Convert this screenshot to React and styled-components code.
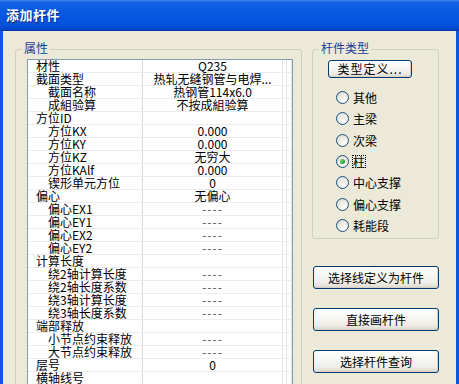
import React from 'react';
import styled, { createGlobalStyle } from 'styled-components';

const Global = createGlobalStyle`
  html, body { margin: 0; padding: 0; background: #ECE9D8; }
  body {
    width: 459px; height: 384px; overflow: hidden;
    font-family: "Noto Sans CJK SC", "DejaVu Sans", sans-serif;
    font-size: 12px; color: #000;
  }
  * { box-sizing: border-box; }
`;

const Window = styled.div`
  width: 459px;
  height: 384px;
  display: flex;
  flex-direction: column;
  overflow: hidden;
`;

const TitleBar = styled.div`
  flex: none;
  height: 31px;
  display: flex;
  align-items: center;
  padding: 0 0 2px 6px;
  background: linear-gradient(180deg, #3C82EE 0%, #1464E4 8%, #0A5BE0 30%, #0556E2 60%, #0451DA 85%, #0340C0 100%);
  border-bottom: 1px solid #0836B0;
`;

const Title = styled.span`
  color: #fff;
  font-weight: bold;
  font-size: 13px;
  letter-spacing: 0.5px;
  text-shadow: 1px 1px 0 #0A2A8A;
`;

const Frame = styled.div`
  flex: 1;
  min-height: 0;
  display: flex;
  gap: 10px;
  padding: 18px 17px 0 12px;
  background: #ECE9D8;
  border-left: 3px solid #0A56DC;
  border-right: 3px solid #0A56DC;
`;

const Group = styled.div`
  position: relative;
  flex: none;
  border: 1px solid #D0D0BF;
  border-radius: 3px;
`;

const LeftGroup = styled(Group)`
  width: 287px;
  height: 420px;
  padding: 9px 8px 0 11px;
`;

const RightGroup = styled(Group)`
  width: 127px;
  height: 190px;
  padding: 10px 0 0 0;
  display: flex;
  flex-direction: column;
  align-items: flex-start;
`;

const GroupLabel = styled.span`
  position: absolute;
  top: -10px;
  left: 6px;
  padding: 0 2px;
  background: #ECE9D8;
  color: #1D3B9A;
  font-size: 12px;
  line-height: 16px;
`;

const Grid = styled.div`
  border: 1px solid #7F9DB9;
  background: #fff;
  height: 400px;
  overflow: hidden;
`;

const Row = styled.div`
  display: grid;
  grid-template-columns: 115px 140px 4px 1fr;
  height: 13px;
  border-bottom: 1px solid #ECECEC;
`;

const Cell = styled.div`
  border-right: 1px solid #E2E2E2;
  line-height: 12px;
  font-size: 12px;
  white-space: nowrap;
`;

const NameCell = styled(Cell)`
  padding-left: ${p => (p.$child ? 20 : 8)}px;
  border-right-color: #D9D9D9;
`;

const ValueCell = styled(Cell)`
  text-align: center;
  color: ${p => (p.$dash ? '#555' : '#000')};
  letter-spacing: ${p => (p.$dash ? '1px' : '0')};
`;

const RightCol = styled.div`
  flex: none;
  width: 127px;
  display: flex;
  flex-direction: column;
`;

const XPButton = styled.button`
  font-family: "Noto Sans CJK SC", "DejaVu Sans", sans-serif;
  font-size: 12px;
  color: #000;
  padding: 0;
  border: 1px solid #003C74;
  border-radius: 3px;
  background: linear-gradient(180deg, #FFFFFF 0%, #F8F8F5 35%, #EFEEE9 75%, #DCD7CC 100%);
  box-shadow: inset -1px -1px 0 #D6D0C5;
  display: flex;
  align-items: center;
  justify-content: center;
  line-height: 1;
`;

const TypeButton = styled(XPButton)`
  width: 84px;
  height: 18px;
  margin-left: 15px;
  letter-spacing: 1px;
`;

const ActionButton = styled(XPButton)`
  width: 126px;
  height: 23px;
  margin-left: 1px;
  margin-top: ${p => p.$top}px;
`;

const RadioList = styled.div`
  margin-top: 13px;
  margin-left: 23px;
  display: flex;
  flex-direction: column;
  gap: 8.35px;
`;

const RadioItem = styled.label`
  display: flex;
  align-items: center;
  gap: 3px;
  height: 13px;
  font-size: 12px;
  line-height: 13px;
`;

const Circle = styled.span`
  flex: none;
  width: 13px;
  height: 13px;
  border-radius: 50%;
  border: 1px solid #1C5180;
  background: radial-gradient(circle at 65% 70%, #FFFFFF 0%, #EEEDE6 45%, #D4D3CC 100%);
  display: flex;
  align-items: center;
  justify-content: center;
  &::after {
    content: '';
    display: ${p => (p.$checked ? 'block' : 'none')};
    width: 5px;
    height: 5px;
    border-radius: 50%;
    background: radial-gradient(circle at 35% 35%, #7BD07B, #21A121 70%);
  }
`;

const RadioText = styled.span`
  padding: 0 1px;
  outline: ${p => (p.$focus ? '1px dotted #000' : 'none')};
  outline-offset: -1px;
`;

const rows = [
  ['材性', 'Q235', false],
  ['截面类型', '热轧无缝钢管与电焊...', false],
  ['截面名称', '热钢管114x6.0', true],
  ['成組验算', '不按成組验算', true],
  ['方位ID', '', false],
  ['方位KX', '0.000', true],
  ['方位KY', '0.000', true],
  ['方位KZ', '无穷大', true],
  ['方位KAlf', '0.000', true],
  ['锲形单元方位', '0', true],
  ['偏心', '无偏心', false],
  ['偏心EX1', '----', true],
  ['偏心EY1', '----', true],
  ['偏心EX2', '----', true],
  ['偏心EY2', '----', true],
  ['计算长度', '', false],
  ['绕2轴计算长度', '----', true],
  ['绕2轴长度系数', '----', true],
  ['绕3轴计算长度', '----', true],
  ['绕3轴长度系数', '----', true],
  ['端部释放', '', false],
  ['小节点约束释放', '----', true],
  ['大节点约束释放', '----', true],
  ['层号', '0', false],
  ['横轴线号', '', false],
];

const radios = ['其他', '主梁', '次梁', '柱', '中心支撑', '偏心支撑', '耗能段'];

export default function App() {
  return (
    <>
      <Global />
      <Window>
        <TitleBar>
          <Title>添加杆件</Title>
        </TitleBar>
        <Frame>
          <LeftGroup>
            <GroupLabel>属性</GroupLabel>
            <Grid>
              {rows.map(([name, value, child], i) => (
                <Row key={i}>
                  <NameCell $child={child}>{name}</NameCell>
                  <ValueCell $dash={value === '----'}>{value}</ValueCell>
                  <Cell />
                  <Cell />
                </Row>
              ))}
            </Grid>
          </LeftGroup>
          <RightCol>
            <RightGroup>
              <GroupLabel>杆件类型</GroupLabel>
              <TypeButton>类型定义...</TypeButton>
              <RadioList>
                {radios.map(r => (
                  <RadioItem key={r}>
                    <Circle $checked={r === '柱'} />
                    <RadioText $focus={r === '柱'}>{r}</RadioText>
                  </RadioItem>
                ))}
              </RadioList>
            </RightGroup>
            <ActionButton $top={27}>选择线定义为杆件</ActionButton>
            <ActionButton $top={19}>直接画杆件</ActionButton>
            <ActionButton $top={19}>选择杆件查询</ActionButton>
          </RightCol>
        </Frame>
      </Window>
    </>
  );
}
